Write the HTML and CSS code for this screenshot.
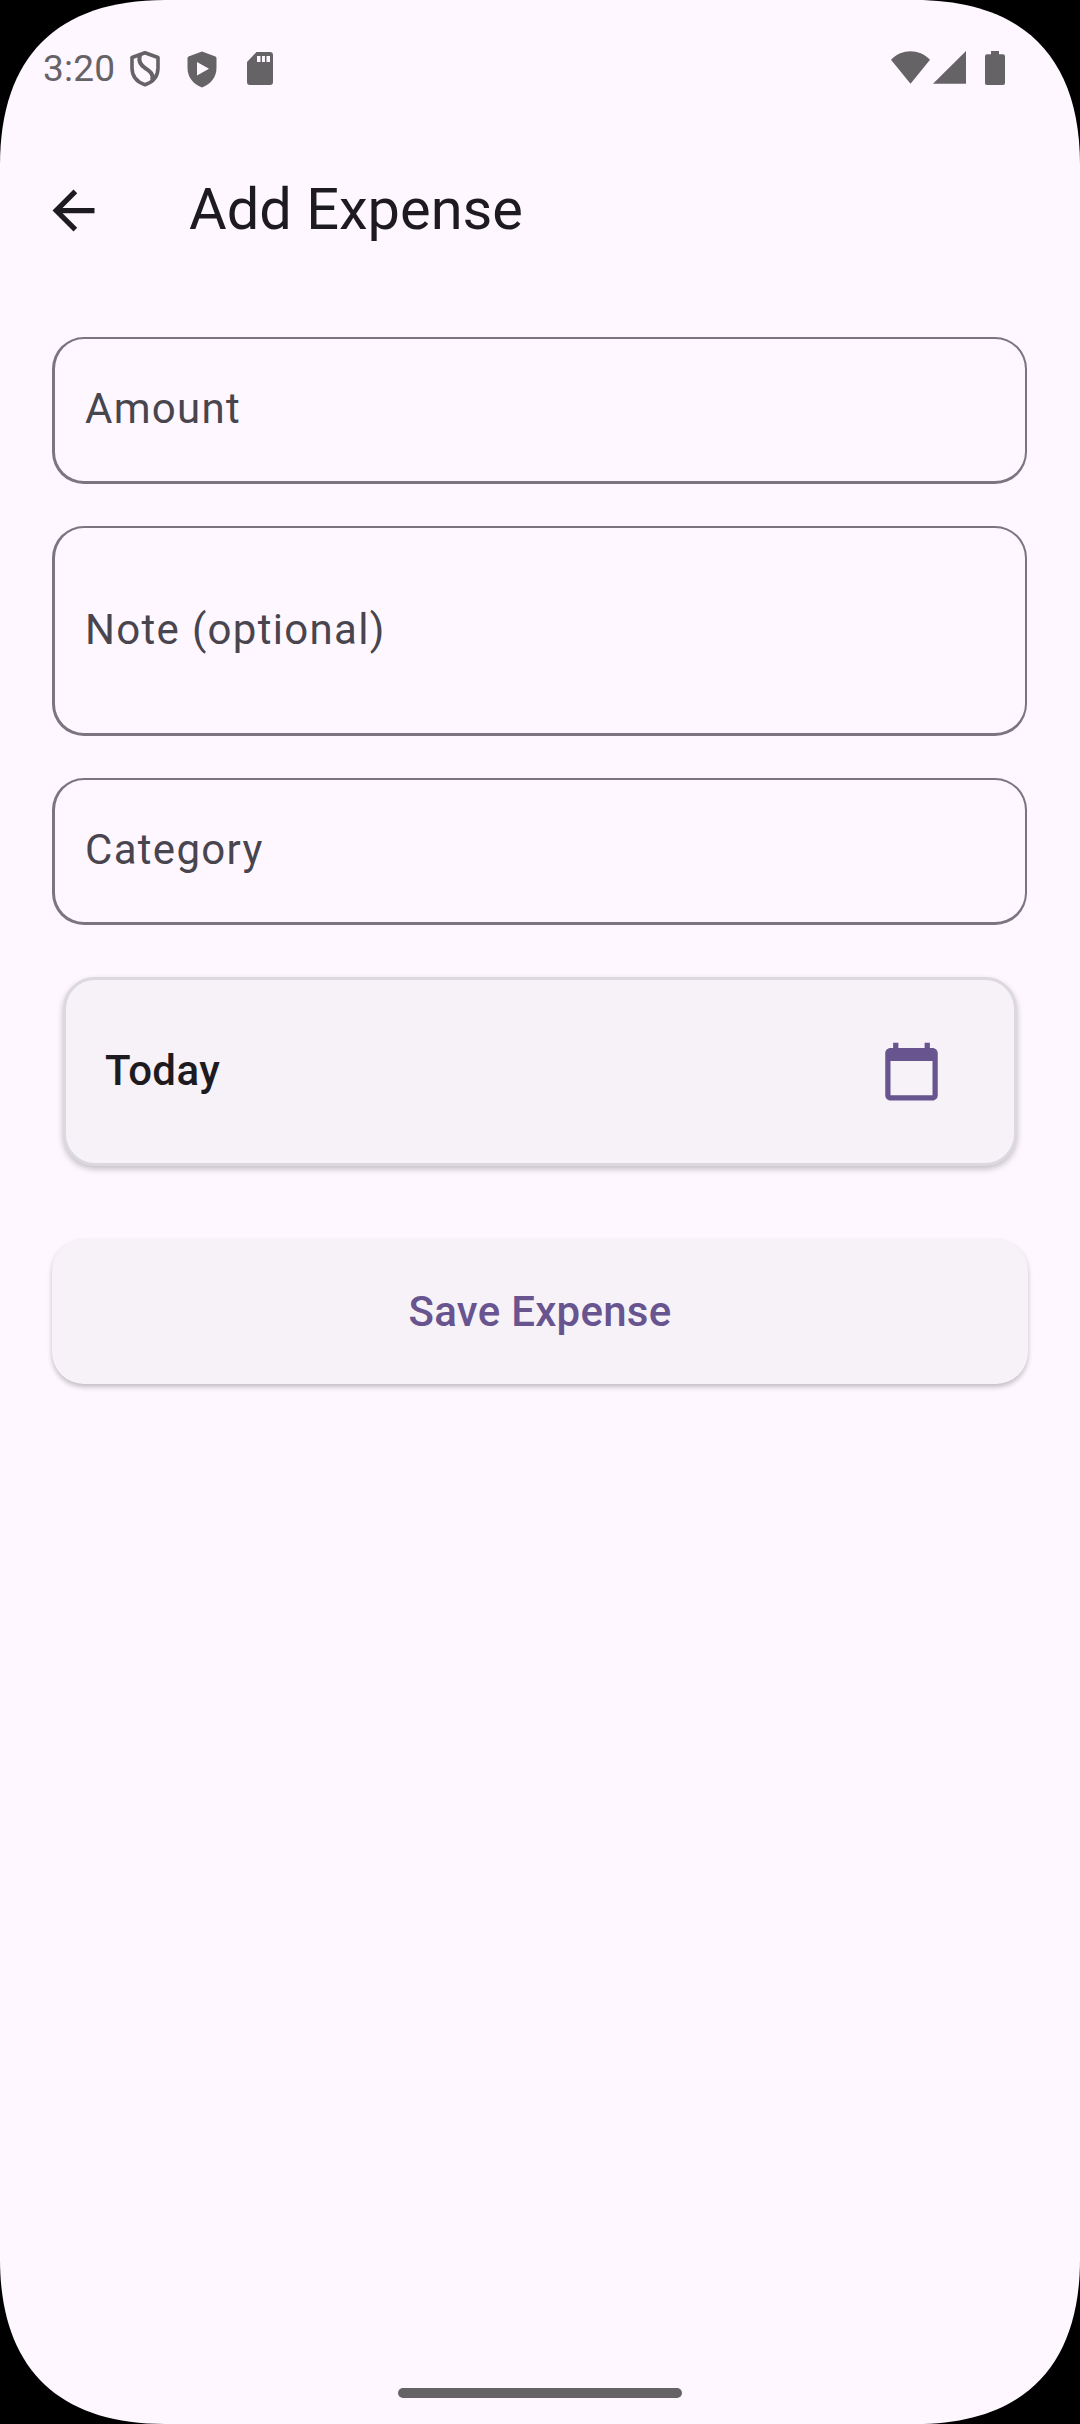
FILE: index.html
```html
<!DOCTYPE html>
<html lang="en">
<head>
<meta charset="utf-8">
<title>Add Expense</title>
<link rel="stylesheet" href="styles.css">
</head>
<body>
<div class="screen">
  <div class="status">
    <span class="clock">3:20</span>
    <svg class="ic-shield" width="30" height="36" viewBox="0 0 30 36" fill="none" stroke="#666367" stroke-width="3.600" stroke-linejoin="round"><path d="M15 1.800 2 6.500V17C2 25 7 31 15 33.800C23 31 28 25 28 17V6.500Z"/><path d="M10 4C8 11 11 14 15 17C20 20.500 24 23 22 29" stroke-width="4"/></svg>
    <svg class="ic-play" width="30" height="37" viewBox="0 0 30 37" fill="#666367" fill-rule="evenodd"><path d="M15 0.500 1.500 5.500Q0.500 6 0.500 7V17C0.500 26 6 33 15 36.500C24 33 29.500 26 29.500 17V7Q29.500 6 28.500 5.500ZM10 11V24.500L22 17.750Z"/></svg>
    <svg class="ic-sd" width="26" height="33" viewBox="0 0 26 33" fill="#666367" fill-rule="evenodd"><path d="M9.500 0H23Q26 0 26 3V30Q26 33 23 33H3Q0 33 0 30V10ZM10 4V10H13.500V4ZM15 4V10H18V4ZM19.500 4V10H23V4Z"/></svg>
    <svg class="ic-wifi" width="39" height="33" viewBox="0 0 39 33" fill="#666367"><path d="M0 8.700C11-2.600 28-2.600 39 8.700L19.500 32.700Z"/></svg>
    <svg class="ic-cell" width="33" height="33" viewBox="0 0 33 33" fill="#666367"><path d="M33 0V32.700H0Z"/></svg>
    <svg class="ic-battery" width="20" height="34" viewBox="0 0 20 34" fill="#666367"><path d="M6 0H14V3.300H18Q20 3.300 20 5.300V32Q20 34 18 34H2Q0 34 0 32V5.300Q0 3.300 2 3.300H6Z"/></svg>
  </div>
  <header class="appbar">
    <svg width="63" height="63" viewBox="0 0 24 24" fill="#1d1b20"><path d="M20 11H7.830l5.590-5.590L12 4l-8 8 8 8 1.410-1.410L7.830 13H20v-2z"/></svg>
    <h1>Add Expense</h1>
  </header>
  <main class="form">
    <div class="field">Amount</div>
    <div class="field field-tall">Note (optional)</div>
    <div class="field">Category</div>
    <div class="card">
      <span class="date">Today</span>
      <svg width="63" height="63" viewBox="0 0 24 24" fill="#68548e"><path d="M20 3h-1V1h-2v2H7V1H5v2H4c-1.100 0-2 .9-2 2v16c0 1.100.9 2 2 2h16c1.100 0 2-.9 2-2V5c0-1.100-.9-2-2-2zm0 18H4V8h16v13z"/></svg>
    </div>
    <button class="save">Save Expense</button>
  </main>
  <div class="home"></div>
</div>
</body>
</html>
```
FILE: styles.css
```css
* { box-sizing: border-box; }
body { margin: 0; background: #000; font-family: Roboto, sans-serif; }
svg { display: block; flex: none; }
.screen {
  width: 1080px; height: 2424px; background: #fef7ff;
  display: flex; flex-direction: column;
  clip-path: path("M0 165C0 57 57 0 165 0H915C1023 0 1080 57 1080 165V2259C1080 2367 1023 2424 915 2424H165C57 2424 0 2367 0 2259Z");
}
.status { height: 136px; padding: 51px 75px 0 43px; display: flex; align-items: flex-start; }
.clock { width: 87px; height: 36px; font-size: 37px; line-height: 36px; letter-spacing: .2px; color: #666367; }
.ic-play { margin-left: 27px; }
.ic-sd { margin: 1px 0 0 30px; }
.ic-wifi { margin-left: auto; }
.ic-cell { margin-left: 3px; }
.ic-battery { margin-left: 19px; }
.appbar { height: 148px; padding: 0 42px; display: flex; align-items: center; gap: 84px; }
h1 { margin: 0; padding-bottom: 2px; font-size: 57.750px; line-height: 74px; font-weight: 400; color: #1d1b20; }
.form { padding: 53px 52px 0; display: flex; flex-direction: column; }
.field {
  height: 147px; margin: 0 1px 42px 0; padding: 0 30px 3px; display: flex; align-items: center;
  border: solid #7a757f; border-width: 2px 2px 3px 3px; border-radius: 32px;
  font-size: 42px; letter-spacing: 1.312px; color: #49454e;
}
.field-tall { height: 210px; padding-bottom: 2px; }
.card {
  height: 189px; margin: 10px 11px 0; padding: 0 71px 0 39px;
  display: flex; align-items: center; justify-content: space-between;
  background: #f7f1f8; border: 3px solid #dcd8df; border-radius: 32px;
  box-shadow: 0 3px 6px rgba(0,0,0,.24);
  font-size: 42px; font-weight: 500; letter-spacing: .394px; color: #1d1b20;
}
.date { padding-bottom: 2px; }
.save {
  height: 145px; margin: 73px 0 0; padding: 0; border: 0; border-radius: 32px;
  background: #f7f1f8; box-shadow: 0 3px 5px rgba(0,0,0,.24);
  font: 500 42px Roboto, sans-serif; letter-spacing: .262px; color: #68548e;
}
.home { width: 284px; height: 10px; margin: auto auto 26px; border-radius: 5px; background: #666367; }
```
